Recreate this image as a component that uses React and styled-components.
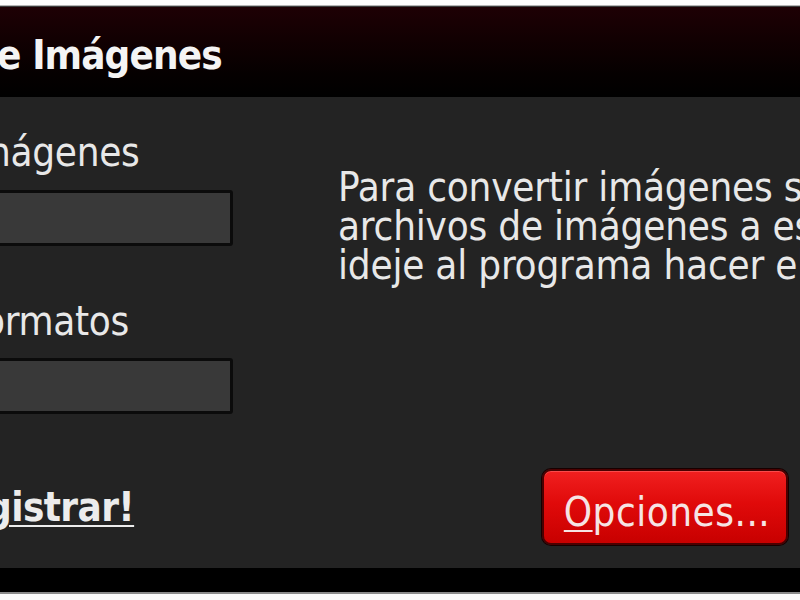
import React from "react";
import styled, { createGlobalStyle } from "styled-components";

const Global = createGlobalStyle`
  html, body { margin: 0; padding: 0; background: #ffffff; overflow: hidden; }
  #root { width: 800px; height: 600px; overflow: hidden; }
`;

const Page = styled.div`
  width: 800px;
  height: 600px;
  overflow: hidden;
  background: #fdfdfd;
  padding-top: 5px;
  box-sizing: border-box;
  font-family: "DejaVu Sans Condensed", "DejaVu Sans", sans-serif;
`;

const Window = styled.div`
  border-top: 1px solid #b5b5b5;
  border-bottom: 2px solid #8c8c8c;
  display: flex;
  flex-direction: column;
`;

const Header = styled.div`
  height: 91px;
  box-sizing: border-box;
  border-top: 1px solid #3a3a3a;
  background: linear-gradient(180deg, #1e0004 0%, #120002 35%, #050000 75%, #000000 100%);
  display: flex;
  align-items: center;
  padding-top: 5px;
  overflow: hidden;
`;

const Title = styled.h1`
  margin: 0 0 0 -3px;
  font-size: 40px;
  font-weight: bold;
  line-height: 48px;
  color: #f4f4f4;
  white-space: nowrap;
  letter-spacing: -0.9px;
`;

const Body = styled.div`
  height: 471px;
  background: #232323;
  display: grid;
  grid-template-columns: 233px 1fr;
  column-gap: 105px;
  color: #e8e8e8;
  font-size: 40px;
  line-height: 48px;
  overflow: hidden;
`;

const LeftCol = styled.div`
  display: flex;
  flex-direction: column;
  padding-top: 31px;
  min-width: 0;
`;

const Label = styled.div`
  white-space: nowrap;
  margin-top: ${(p) => p.$gap || 0}px;
  margin-left: ${(p) => -(p.$shift || 0)}px;
  letter-spacing: -0.3px;
`;

const Field = styled.div`
  height: 56px;
  box-sizing: border-box;
  margin-top: ${(p) => p.$gap || 0}px;
  margin-left: -6px;
  background: #393939;
  border: 3px solid #0b0b0b;
  border-radius: 3px;
`;

const RegLink = styled.a`
  margin-top: 69px;
  margin-left: -14px;
  font-weight: bold;
  color: #ececec;
  text-decoration: underline;
  text-decoration-thickness: 2px;
  text-underline-offset: 4px;
  white-space: nowrap;
  letter-spacing: -0.6px;
`;

const RightCol = styled.div`
  display: flex;
  flex-direction: column;
  justify-content: space-between;
  min-width: 0;
`;

const Info = styled.p`
  margin: 71px 0 0 0;
  padding-bottom: 12px;
  line-height: 39px;
  white-space: nowrap;
  overflow: hidden;
  letter-spacing: -0.2px;
`;

const Button = styled.button`
  align-self: flex-end;
  margin: 0 12px 23px 0;
  width: 246px;
  height: 76px;
  box-sizing: border-box;
  padding: 9px 0 0 4px;
  border: 2px solid #4a0000;
  border-radius: 9px;
  background: linear-gradient(180deg, #f02020 0%, #e00a0a 45%, #c80000 100%);
  box-shadow: inset 0 1px 0 rgba(255, 120, 120, 0.5), 0 0 0 1px #150000;
  color: #f6e4e4;
  font-family: "DejaVu Sans Condensed", "DejaVu Sans", sans-serif;
  font-size: 40px;
  line-height: 48px;
  letter-spacing: 0.5px;
  display: flex;
  align-items: center;
  justify-content: center;
  white-space: nowrap;
  u { text-decoration-thickness: 2px; text-underline-offset: 4px; }
`;

const Footer = styled.div`
  height: 24px;
  background: #000000;
`;

export default function App() {
  return (
    <>
      <Global />
      <Page>
        <Window>
          <Header>
            <Title>e Imágenes</Title>
          </Header>
          <Body>
            <LeftCol>
              <Label $shift={12}>nágenes</Label>
              <Field $gap={14} />
              <Label $gap={51} $shift={17}>ormatos</Label>
              <Field $gap={13} />
              <RegLink href="#">gistrar!</RegLink>
            </LeftCol>
            <RightCol>
              <Info>
                Para convertir imágenes seleccione los
                <br />
                archivos de imágenes a esta ventana
                <br />
                ideje al programa hacer el resto.
              </Info>
              <Button>
                <span>
                  <u>O</u>pciones...
                </span>
              </Button>
            </RightCol>
          </Body>
          <Footer />
        </Window>
      </Page>
    </>
  );
}
